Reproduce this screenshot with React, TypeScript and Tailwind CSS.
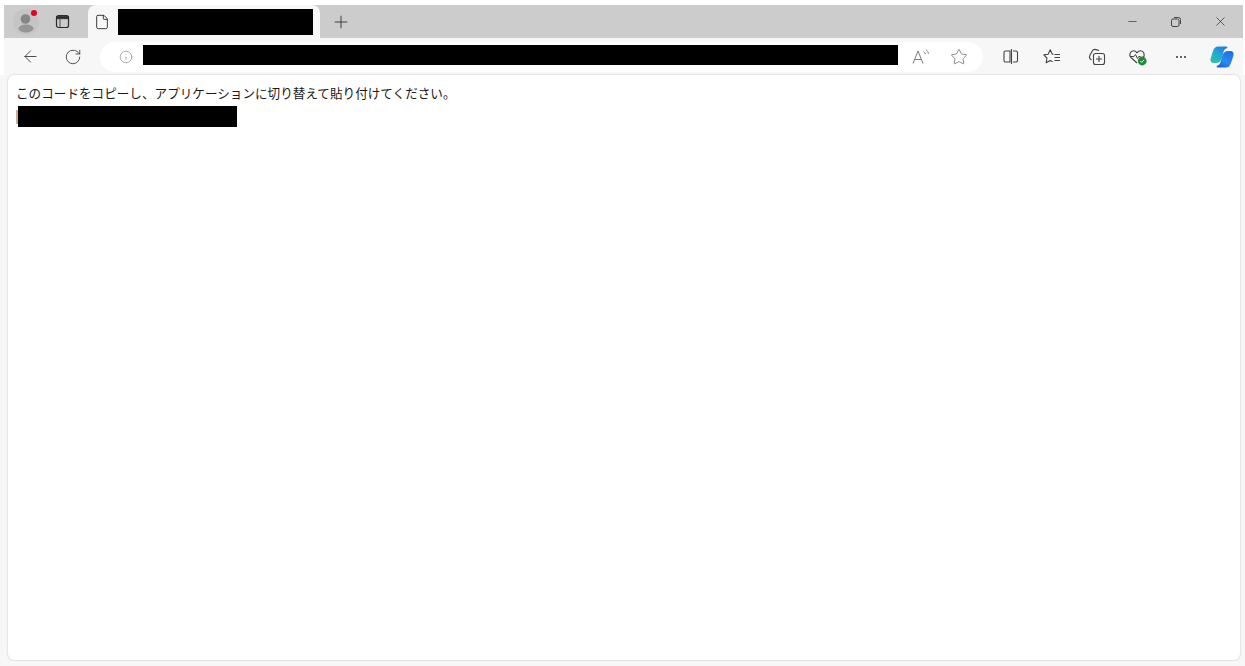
import React from 'react';
import { ArrowLeft, RotateCw, Info, Star, Plus, X, Minus, File } from 'lucide-react';

const Redacted: React.FC<{ className: string }> = ({ className }) => <div className={`bg-black shrink-0 ${className}`} />;

const Profile = () => (
  <div className="relative w-[26px] h-[26px] rounded-full bg-[#c6c4c4] flex items-center justify-center">
    <svg width="20" height="24" viewBox="0 0 20 24">
      <circle cx="9.500" cy="9" r="4.800" fill="#868686" />
      <ellipse cx="10" cy="18.500" rx="7.500" ry="4" fill="#969696" />
    </svg>
    <span className="absolute top-[1px] right-[2px] w-[6px] h-[6px] rounded-full bg-[#e3001b]" />
  </div>
);

const TabsIcon = () => (
  <svg width="15" height="15" viewBox="0 0 15 15" fill="none" stroke="#2b2b2b">
    <rect x="1.500" y="1.500" width="12" height="12" rx="2" strokeWidth="1.200" />
    <path d="M1.500 2.500h12v2.200h-12z" fill="#2b2b2b" strokeWidth="0.800" />
    <path d="M5 4.500v9" strokeWidth="0.800" />
  </svg>
);

const ReadAloud = () => (
  <svg width="20" height="18" viewBox="0 0 20 18" fill="none" stroke="#7a7a7a" strokeWidth="1">
    <path d="M2 15.500 7 3l5 12.500M3.800 11.500h6.400" />
    <path d="M12.500 3.500c1 .7 1.600 1.600 1.800 2.800M15 1.800c1.400 1 2.200 2.300 2.500 4" />
  </svg>
);

const SplitIcon = () => (
  <svg width="16" height="17" viewBox="0 0 16 17" fill="none" stroke="#444" strokeWidth="1.100">
    <path d="M7 3H2.500A1.500 1.500 0 0 0 1 4.500v8A1.500 1.500 0 0 0 2.500 14H7z" />
    <path d="M10 3h3a1.500 1.500 0 0 1 1.500 1.500v8A1.500 1.500 0 0 1 13 14h-3M8.500 1v15" />
  </svg>
);

const FavoritesIcon = () => (
  <svg width="18" height="18" viewBox="0 0 18 18" fill="none" stroke="#444" strokeWidth="1.100">
    <path d="M10.500 6.200 H9.400 L7.200 1.800 5.100 6.200 .8 6.900 3.900 10 3.200 14.800 7.200 12.500 9.500 13.800" strokeLinejoin="round" />
    <path d="M11.500 6.500h5.500M11.500 9.500h5.500M11.500 12.500h5.500" />
  </svg>
);

const CollectionsIcon = () => (
  <svg width="18" height="18" viewBox="0 0 18 18" fill="none" stroke="#444" strokeWidth="1.100">
    <path d="M11 2.500 8 1.600C6 1 4.500 2 4 3.600L1.800 7.600C1 9.500 1.700 11 3.500 12" />
    <rect x="5.500" y="5.500" width="11" height="11" rx="2" />
    <path d="M11 8v6M8 11h6" />
  </svg>
);

const HealthIcon = () => (
  <svg width="20" height="18" viewBox="0 0 20 18" fill="none">
    <path d="M9 15 3 9.500C.5 7 2.200 2.800 5.500 2.800c1.600 0 2.700.8 3.500 2 .8-1.200 2-2 3.500-2 3.300 0 5 4.200 2.500 6.700" stroke="#444" strokeWidth="1.100" />
    <path d="M2.500 8.500h3.500l1.500-2 2 4 1.200-2h1.800" stroke="#444" strokeWidth="1" />
    <circle cx="14.200" cy="13" r="4.400" fill="#1f8a3a" />
    <path d="m12.300 13 1.400 1.400 2.400-2.600" stroke="#fff" strokeWidth="1" />
  </svg>
);

const CopilotIcon = () => (
  <svg width="24" height="22" viewBox="0 0 24 22">
    <defs>
      <linearGradient id="copA" x1="0.200" y1="1" x2="0.800" y2="0">
        <stop offset="0" stopColor="#2fc3a0" />
        <stop offset="0.500" stopColor="#1fa9d8" />
        <stop offset="1" stopColor="#2a78e0" />
      </linearGradient>
      <linearGradient id="copB" x1="0.800" y1="0" x2="0.200" y2="1">
        <stop offset="0" stopColor="#1f6fe0" />
        <stop offset="0.600" stopColor="#2b8cf0" />
        <stop offset="1" stopColor="#1c5fd0" />
      </linearGradient>
    </defs>
    <path d="M8 .5h8c1.500 0 2 1 1 1.500-1.800.7-3 2-3.500 4L11.800 12c-.8 3-2.800 5-5.800 5H3.500C1.200 17 0 15 .5 12.800L3 5C4 2 5.500.5 8 .5z" fill="url(#copA)" />
    <path d="M16 21.500H8c-1.500 0-2-1-1-1.500 1.800-.7 3-2 3.500-4L12.200 10c.8-3 2.800-5 5.800-5h2.500c2.300 0 3.500 2 3 4.200L21 17c-1 3-2.500 4.500-5 4.500z" fill="url(#copB)" />
  </svg>
);

export default function App() {
  return (
    <div className="h-[666px] w-full bg-white pt-[5px] pl-[4px] pr-[2px] flex flex-col overflow-hidden font-['Liberation_Sans','Noto_Sans_CJK_JP',sans-serif]">
      {/* tab strip */}
      <div className="h-[33px] shrink-0 bg-[#cccccc] flex items-center text-[#333]">
        <div className="w-[84px] flex items-center shrink-0 pl-[9px]">
          <Profile />
          <div className="ml-[16px]"><TabsIcon /></div>
        </div>
        <div className="w-[232px] h-[33px] shrink-0 bg-[#f7f7f7] rounded-t-[8px] flex items-center pl-[6px]">
          <File size={16} strokeWidth={1.3} color="#222" />
          <Redacted className="ml-[8px] w-[195px] h-[26px]" />
        </div>
        <Plus size={20} strokeWidth={1.1} className="ml-[11px]" color="#333" />
        <div className="ml-auto flex items-center pr-[15px] gap-[31px]">
          <Minus size={13} strokeWidth={1.4} color="#444" />
          <svg width="12" height="12" viewBox="0 0 12 12" fill="none" stroke="#444" strokeWidth="1">
            <rect x="1.500" y="3" width="7.500" height="7.500" rx="1.500" />
            <path d="M4 1.500h4.500a2 2 0 0 1 2 2V8" />
          </svg>
          <X size={15} strokeWidth={1.2} color="#333" />
        </div>
      </div>
      {/* toolbar */}
      <div className="h-[37px] shrink-0 bg-[#f7f7f7] flex items-center">
        <ArrowLeft size={19} strokeWidth={1.1} className="ml-[17px]" color="#333" />
        <RotateCw size={18} strokeWidth={1.1} className="ml-[24px]" color="#333" />
        <div className="ml-[18px] w-[883px] h-[30px] rounded-full bg-white flex items-center shrink-0">
          <Info size={14} strokeWidth={1} className="ml-[19px]" color="#777" />
          <Redacted className="ml-[10px] w-[755px] h-[20px] mb-[4px]" />
          <div className="ml-[13px]"><ReadAloud /></div>
          <Star size={18} strokeWidth={1} className="ml-[19px]" color="#666" />
        </div>
        <div className="ml-[20px]"><SplitIcon /></div>
        <div className="ml-[24px]"><FavoritesIcon /></div>
        <div className="ml-[27px]"><CollectionsIcon /></div>
        <div className="ml-[22px]"><HealthIcon /></div>
        <span className="ml-[28px] flex gap-[2px]">
          <i className="w-[2px] h-[2px] bg-[#333] rounded-full" />
          <i className="w-[2px] h-[2px] bg-[#333] rounded-full" />
          <i className="w-[2px] h-[2px] bg-[#333] rounded-full" />
        </span>
        <div className="ml-[24px]"><CopilotIcon /></div>
      </div>
      {/* page */}
      <div className="flex-1 bg-[#f7f7f7] -ml-[4px] -mr-[2px] pl-[8px] pr-[5px] pb-[6px]">
        <div className="h-full bg-white rounded-[6px] shadow-[0_0_2px_rgba(0,0,0,0.25)] pl-[8px] pt-[11px]">
          <p className="text-[12.6px] leading-[16px] text-[#1a1a1a] whitespace-nowrap">このコードをコピーし、アプリケーションに切り替えて貼り付けてください。</p>
          <div className="mt-[4px] flex items-center">
            <div className="w-[2px] h-[14px] bg-[#c9b08a]" />
            <Redacted className="w-[219px] h-[21px]" />
          </div>
        </div>
      </div>
    </div>
  );
}
